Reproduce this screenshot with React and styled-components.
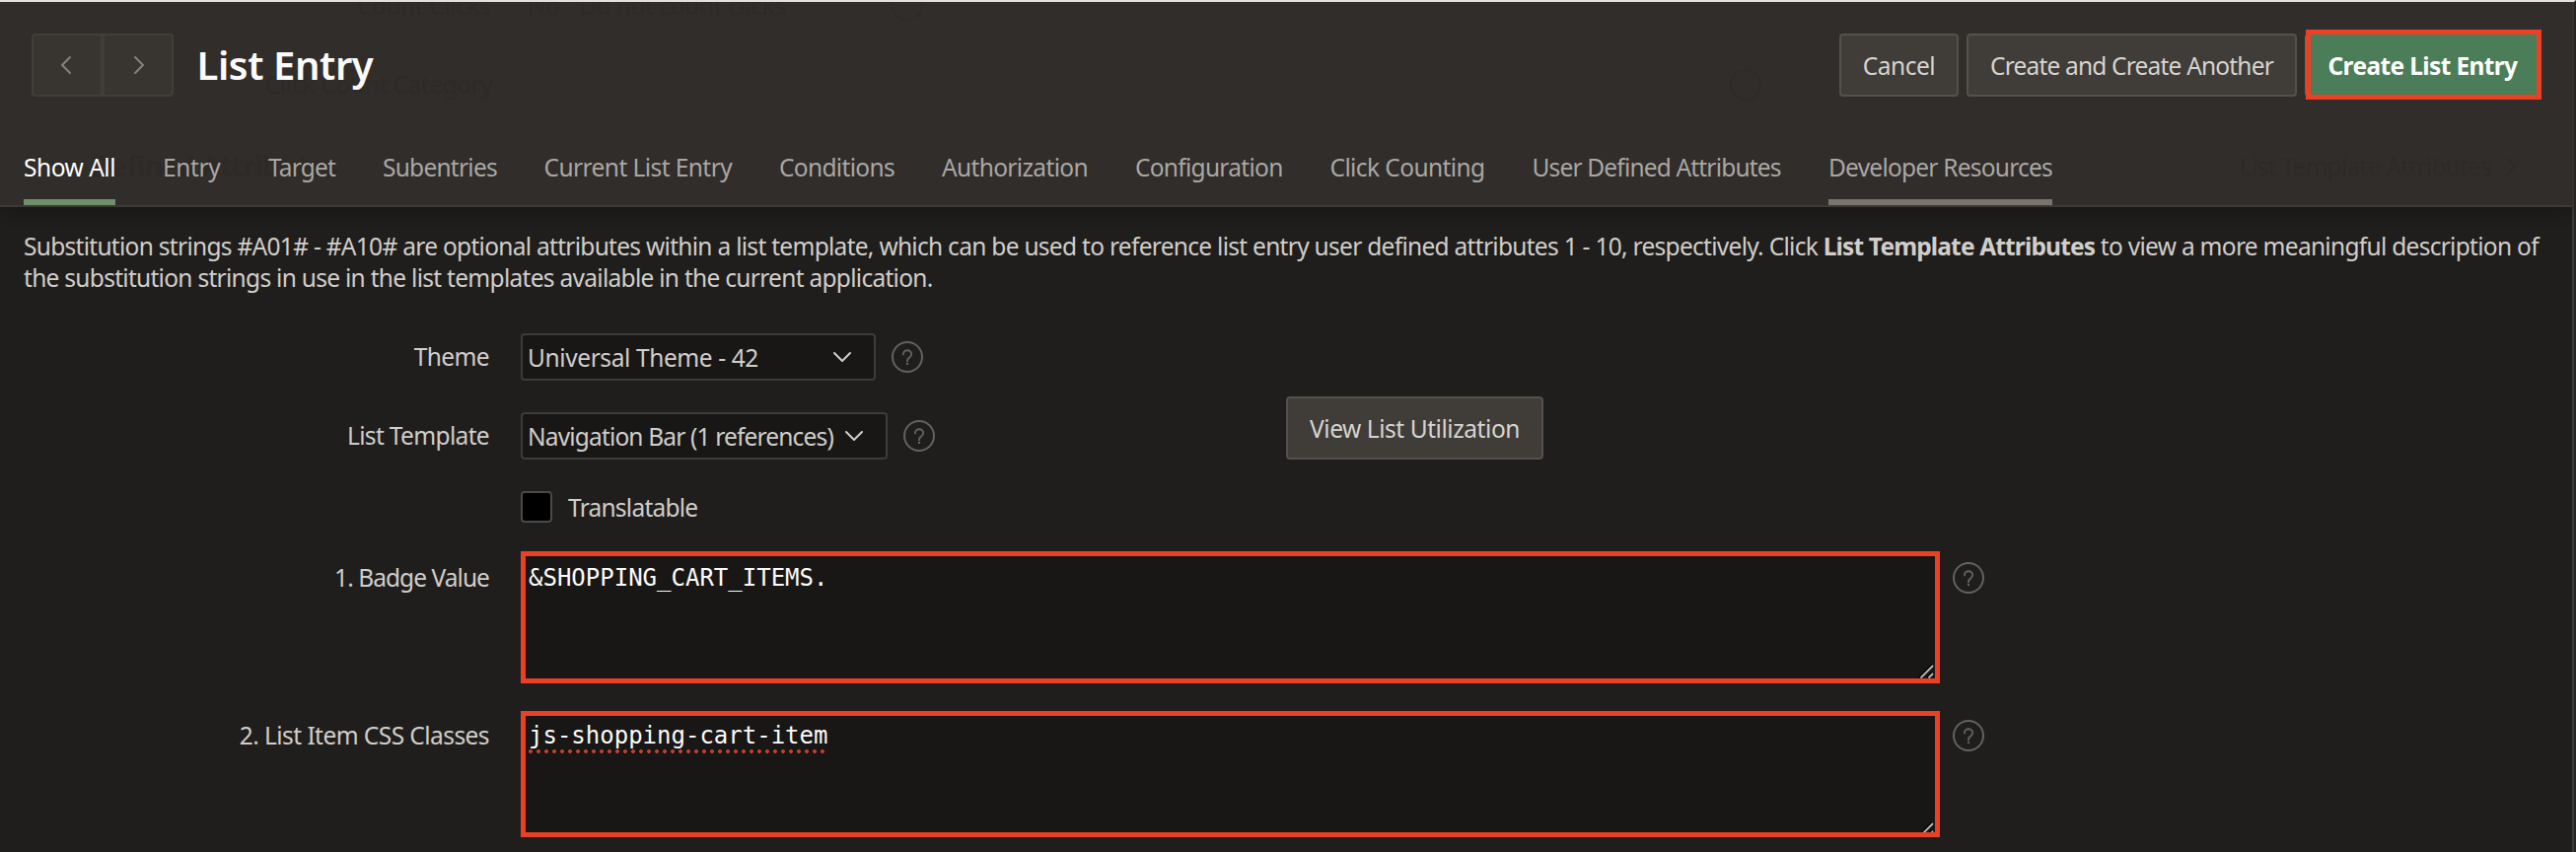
import React from "react";
import styled, { createGlobalStyle } from "styled-components";

const GlobalStyle = createGlobalStyle`
  * { box-sizing: border-box; }
  body {
    margin: 0;
    background: #201e1c;
    font-family: "Noto Sans", "Open Sans", sans-serif;
    font-size: 24.5px;
    color: #d0ceca;
  }
`;

const Frame = styled.div`
  height: 864px;
  overflow: hidden;
  border-top: 2px solid #e1e1df;
  border-right: 2px solid #262422;
  background: #201e1c;
`;

const Dialog = styled.div`
  height: 862px;
  border-right: 2px solid #3d3b37;
`;

const Header = styled.header`
  position: relative;
  height: 208px;
  background: #312d2a;
  border-bottom: 2px solid #3c3a34;
  box-shadow: 0 2px 16px rgba(0, 0, 0, 0.32);
`;

const Ghosts = styled.div`
  position: absolute;
  inset: 0;
  overflow: hidden;
  color: #2d2a27;
  pointer-events: none;
`;

const Ghost = styled.span`
  position: absolute;
  left: ${(p) => p.$x}px;
  top: ${(p) => p.$y}px;
  display: flex;
  align-items: center;
  gap: 14px;
  line-height: 32px;
  white-space: nowrap;
  font-size: ${(p) => p.$size || 24.5}px;
  font-weight: ${(p) => (p.$bold ? 700 : 400)};
  letter-spacing: ${(p) => p.$track ?? -0.7}px;
`;

const GhostRing = styled.span`
  position: absolute;
  left: ${(p) => p.$x}px;
  top: ${(p) => p.$y}px;
  width: 32px;
  height: 32px;
  border: 2px solid #2e2b28;
  border-radius: 50%;
`;

const TitleBar = styled.div`
  position: relative;
  display: flex;
  align-items: center;
  height: 128px;
  padding: 0 32px;
`;

const Pager = styled.div`
  display: flex;
`;

const PagerButton = styled.button`
  width: 72px;
  height: 64px;
  padding: ${(p) => (p.$last ? "0 0 0 1px" : "0 2px 0 0")};
  display: flex;
  align-items: center;
  justify-content: center;
  background: #383430;
  border: 2px solid #413d39;
  border-radius: ${(p) => (p.$last ? "0 4px 4px 0" : "4px 0 0 4px")};
  color: #85817d;
`;

const Title = styled.h1`
  flex: 1;
  margin: 0 0 0 23.5px;
  font-size: 40px;
  font-weight: 600;
  line-height: 56px;
  letter-spacing: -0.4px;
  color: #fcfbfa;
`;

const Actions = styled.div`
  display: flex;
  gap: 8px;
`;

const Button = styled.button`
  position: relative;
  width: ${(p) => p.$width}px;
  height: 64px;
  padding: 0;
  font: inherit;
  font-weight: ${(p) => (p.$primary ? 700 : 400)};
  letter-spacing: ${(p) => p.$track}px;
  white-space: nowrap;
  color: ${(p) => (p.$primary ? "#ffffff" : "#d6d4d0")};
  background: ${(p) => (p.$primary ? "#4b7d58" : "#403c38")};
  border: 2px solid ${(p) => (p.$primary ? "#4b7d58" : "#55504a")};
  border-radius: 4px;
`;

const Highlight = styled.span`
  position: absolute;
  inset: -6px -3px -5px -1px;
  border: 5px solid #ea4025;
`;

const Tabs = styled.nav`
  position: relative;
  display: flex;
  gap: 48px;
  height: 78px;
  padding: 0 24px;
`;

const Tab = styled.a`
  width: ${(p) => p.$width}px;
  height: 78px;
  line-height: 80px;
  white-space: nowrap;
  letter-spacing: ${(p) => p.$track}px;
  color: ${(p) => (p.$active ? "#ffffff" : "#a9a7a4")};
  box-shadow: ${(p) => (p.$bar ? `inset 0 -6px 0 ${p.$bar}` : "none")};
`;

const Intro = styled.p`
  margin: 24px 24px 40px;
  line-height: 32px;
  letter-spacing: -0.71px;
  white-space: nowrap;

  b { letter-spacing: -0.85px; }
`;

const Split = styled.div`
  display: flex;
  align-items: flex-end;
`;

const SelectColumn = styled.div`
  display: flex;
  flex-direction: column;
  gap: 32px;
  width: 1304px;
`;

const Field = styled.div`
  display: flex;
  align-items: flex-start;
  margin-top: ${(p) => p.$top || 0}px;
`;

const Label = styled.label`
  width: 496px;
  margin-right: 32px;
  padding-top: ${(p) => p.$drop || 0}px;
  line-height: 32px;
  text-align: right;
  letter-spacing: ${(p) => p.$track}px;
`;

const Select = styled.div`
  display: flex;
  align-items: center;
  justify-content: space-between;
  width: ${(p) => p.$width}px;
  height: 48px;
  padding: 0 22px 0 5px;
  background: #191715;
  border: 2px solid #3f3c37;
  border-radius: 4px;
  white-space: nowrap;
  letter-spacing: ${(p) => p.$track}px;
`;

const HelpButton = styled.span`
  width: 32px;
  height: 32px;
  margin: ${(p) => p.$drop}px 0 0 ${(p) => p.$gap || 16}px;
  color: #64625f;

  svg { display: block; }
`;

const Checkbox = styled.span`
  width: 32px;
  height: 32px;
  margin-right: 16px;
  background: #000;
  border: 2px solid #4a4947;
  border-radius: 4px;
`;

const CheckLabel = styled.span`
  line-height: 33px;
  height: 32px;
  letter-spacing: -0.76px;
`;

const TextArea = styled.div`
  position: relative;
  width: 1439px;
  height: ${(p) => p.$height}px;
  padding: ${(p) => p.$pad}px 3px 0;
  overflow: hidden;
  background: #191715;
  border: 5px solid #ea4025;
  font-family: "DejaVu Sans Mono", monospace;
  font-size: 24px;
  line-height: 28px;
  color: #fcfbfa;
`;

const Misspelled = styled.span`
  display: inline-block;
  height: 33px;
  background: radial-gradient(circle at 2px 2px, #c03f33 1.6px, transparent 2.2px) 0 28px / 8px 4px repeat-x;
`;

const Grip = styled.svg`
  position: absolute;
  right: 0;
  top: ${(p) => p.$top}px;
`;

function Chevron({ d, width, height }) {
  return (
    <svg width={width} height={height} fill="none" stroke="currentColor" strokeWidth="2" strokeLinecap="round" strokeLinejoin="round">
      <path d={d} />
    </svg>
  );
}

function Help({ drop, gap }) {
  return (
    <HelpButton $drop={drop} $gap={gap}>
      <svg width="32" height="32" viewBox="0 0 32 32" fill="none" stroke="currentColor" strokeWidth="2">
        <circle cx="16" cy="16" r="15" />
        <path d="M11.9 13.4c0-2.4 1.7-4.2 4.1-4.2s4.2 1.7 4.2 3.9c0 1.7-.9 2.6-2.1 3.5-1.3.9-2.1 1.6-2.1 3.2v.6" strokeLinecap="round" strokeWidth="1.9" />
        <path d="M16 22v2" />
      </svg>
    </HelpButton>
  );
}

function ResizeGrip({ top }) {
  return (
    <Grip $top={top} width="17" height="17" fill="none">
      <path d="M1 15 14 2M9 15l5-5" stroke="#050505" strokeWidth="2" />
      <path d="M2.5 15.5 15 3M10.5 15.5 15 11" stroke="#b9b8b6" strokeWidth="1.8" />
    </Grip>
  );
}

const tabs = [
  { name: "Show All", width: 93, track: -0.48, active: true, bar: "#70906a" },
  { name: "Entry", width: 59, track: -0.4 },
  { name: "Target", width: 68, track: -0.83 },
  { name: "Subentries", width: 115.5, track: -0.75 },
  { name: "Current List Entry", width: 190.5, track: -0.57 },
  { name: "Conditions", width: 117, track: -0.67 },
  { name: "Authorization", width: 148, track: -0.65 },
  { name: "Configuration", width: 149.5, track: -0.72 },
  { name: "Click Counting", width: 157, track: -0.59 },
  { name: "User Defined Attributes", width: 252.5, track: -0.83 },
  { name: "Developer Resources", width: 227, track: -0.77, bar: "#7a736e" },
];

export default function App() {
  return (
    <Frame>
      <GlobalStyle />
      <Dialog>
        <Header>
          <Ghosts aria-hidden="true">
            <Ghost $x={362} $y={-12} $track={-0.4}>Count Clicks</Ghost>
            <Ghost $x={535} $y={-12} $track={-0.4}>No - Do not count clicks</Ghost>
            <GhostRing $x={904} $y={-13} />
            <Ghost $x={269} $y={68} $track={-0.45}>Click Count Category</Ghost>
            <GhostRing $x={1754} $y={68} />
            <Ghost $x={24} $y={150} $size={28} $track={-0.6} $bold>User Defined Attributes</Ghost>
            <Ghost $x={2271} $y={151} $track={-0.75}>
              List Template Attributes
              <Chevron width={12} height={20} d="m2 2 8 8-8 8" />
            </Ghost>
          </Ghosts>
          <TitleBar>
            <Pager>
              <PagerButton aria-label="Previous">
                <Chevron width={12} height={20} d="M10 2 2 10l8 8" />
              </PagerButton>
              <PagerButton $last aria-label="Next">
                <Chevron width={12} height={20} d="m2 2 8 8-8 8" />
              </PagerButton>
            </Pager>
            <Title>List Entry</Title>
            <Actions>
              <Button $width={121} $track={-0.5}>Cancel</Button>
              <Button $width={335} $track={-0.81}>Create and Create Another</Button>
              <Button $width={239} $track={-0.63} $primary>
                Create List Entry
                <Highlight />
              </Button>
            </Actions>
          </TitleBar>
          <Tabs>
            {tabs.map((t) => (
              <Tab key={t.name} $width={t.width} $track={t.track} $active={t.active} $bar={t.bar}>
                {t.name}
              </Tab>
            ))}
          </Tabs>
        </Header>

        <Intro>
          Substitution strings #A01# - #A10# are optional attributes within a list template, which can be used to
          reference list entry user defined attributes 1 - 10, respectively. Click <b>List Template Attributes</b> to
          view a more meaningful description of
          <br />
          the substitution strings in use in the list templates available in the current application.
        </Intro>

        <Split>
          <SelectColumn>
            <Field>
              <Label $drop={8} $track={-0.6}>Theme</Label>
              <Select $width={360} $track={-0.4}>
                Universal Theme - 42
                <Chevron width={20} height={12} d="m2 2 8 8 8-8" />
              </Select>
              <Help drop={8} />
            </Field>
            <Field>
              <Label $drop={8} $track={-0.66}>List Template</Label>
              <Select $width={372} $track={-0.84}>
                Navigation Bar (1 references)
                <Chevron width={20} height={12} d="m2 2 8 8 8-8" />
              </Select>
              <Help drop={8} />
            </Field>
          </SelectColumn>
          <Button $width={261} $track={-0.44}>View List Utilization</Button>
        </Split>

        <Field $top={32}>
          <Label />
          <Checkbox />
          <CheckLabel>Translatable</CheckLabel>
        </Field>
        <Field $top={29}>
          <Label $drop={11} $track={-0.95}>1. Badge Value</Label>
          <TextArea $height={134} $pad={8}>
            &amp;SHOPPING_CART_ITEMS.
            <ResizeGrip top={108} />
          </TextArea>
          <Help drop={11} gap={13} />
        </Field>
        <Field $top={28}>
          <Label $drop={9} $track={-0.56}>2. List Item CSS Classes</Label>
          <TextArea $height={128} $pad={6}>
            <Misspelled>js-shopping-cart-item</Misspelled>
            <ResizeGrip top={106} />
          </TextArea>
          <Help drop={9} gap={13} />
        </Field>
      </Dialog>
    </Frame>
  );
}
